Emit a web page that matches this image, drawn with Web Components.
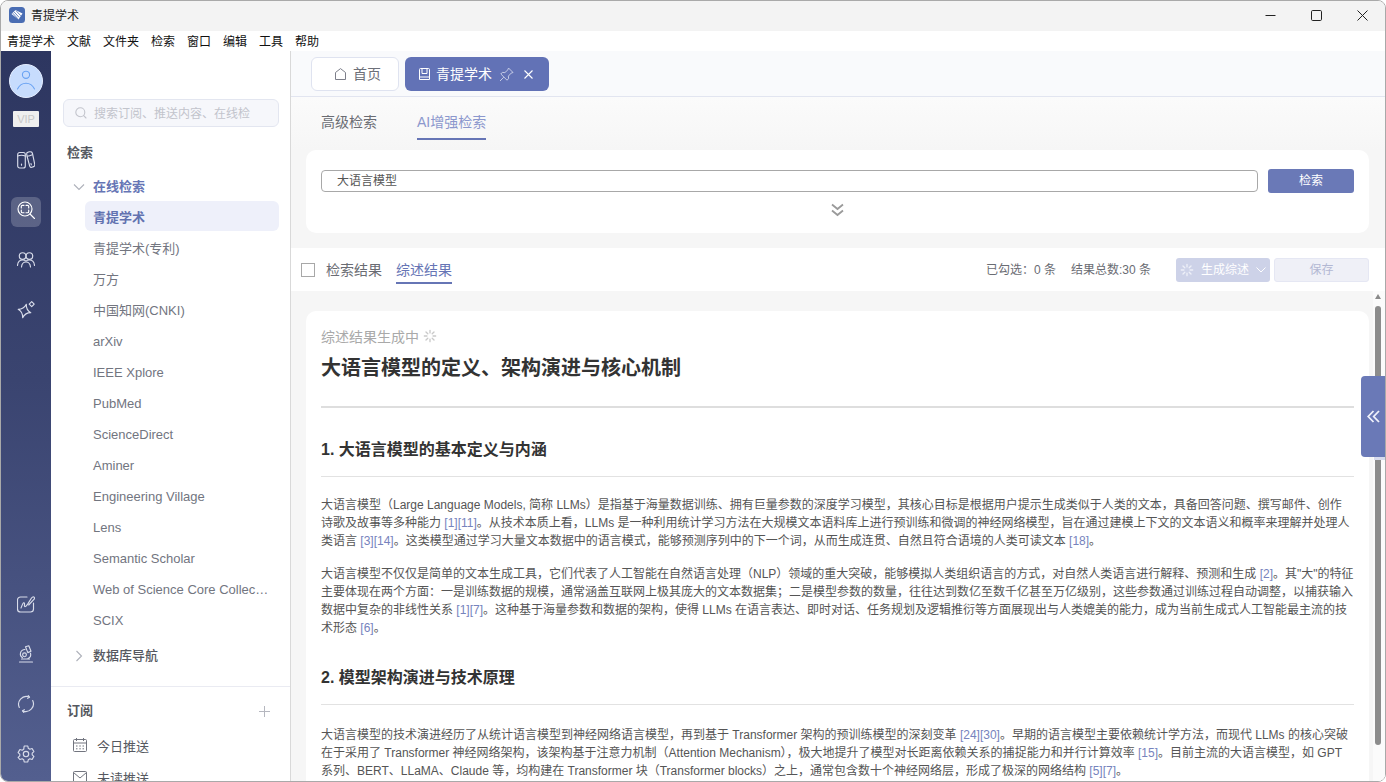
<!DOCTYPE html>
<html lang="zh-CN">
<head>
<meta charset="utf-8">
<title>青提学术</title>
<style>
  html, body { margin: 0; padding: 0; height: 100%; background: #fff; overflow: hidden; }
  body { font-family: "Liberation Sans", "Noto Sans CJK SC", sans-serif; }
</style>
</head>
<body>
<app-shell>
  <title-bar slot="title"></title-bar>
  <menu-bar slot="menu"></menu-bar>
  <side-rail slot="rail"></side-rail>
  <side-panel slot="side">
    <side-item active>青提学术</side-item>
    <side-item>青提学术(专利)</side-item>
    <side-item>万方</side-item>
    <side-item>中国知网(CNKI)</side-item>
    <side-item>arXiv</side-item>
    <side-item>IEEE Xplore</side-item>
    <side-item>PubMed</side-item>
    <side-item>ScienceDirect</side-item>
    <side-item>Aminer</side-item>
    <side-item>Engineering Village</side-item>
    <side-item>Lens</side-item>
    <side-item>Semantic Scholar</side-item>
    <side-item>Web of Science Core Collection</side-item>
    <side-item>SCIX</side-item>
  </side-panel>
  <tab-strip slot="main"></tab-strip>
  <sub-tabs slot="main"></sub-tabs>
  <search-panel slot="main"></search-panel>
  <result-bar slot="main"></result-bar>
  <review-area slot="main">
    <h2-title>1. 大语言模型的基本定义与内涵</h2-title>
    <review-para style="--top:19px">大语言模型（Large Language Models, 简称 LLMs）是指基于海量数据训练、拥有巨量参数的深度学习模型，其核心目标是根据用户提示生成类似于人类的文本，具备回答问题、撰写邮件、创作<br>诗歌及故事等多种能力 <a>[1][11]</a>。从技术本质上看，LLMs 是一种利用统计学习方法在大规模文本语料库上进行预训练和微调的神经网络模型，旨在通过建模上下文的文本语义和概率来理解并处理人<br>类语言 <a>[3][14]</a>。这类模型通过学习大量文本数据中的语言模式，能够预测序列中的下一个词，从而生成连贯、自然且符合语境的人类可读文本 <a>[18]</a>。</review-para>
    <review-para style="--top:15px">大语言模型不仅仅是简单的文本生成工具，它们代表了人工智能在自然语言处理（NLP）领域的重大突破，能够模拟人类组织语言的方式，对自然人类语言进行解释、预测和生成 <a>[2]</a>。其"大"的特征<br>主要体现在两个方面：一是训练数据的规模，通常涵盖互联网上极其庞大的文本数据集；二是模型参数的数量，往往达到数亿至数千亿甚至万亿级别，这些参数通过训练过程自动调整，以捕获输入<br>数据中复杂的非线性关系 <a>[1][7]</a>。这种基于海量参数和数据的架构，使得 LLMs 在语言表达、即时对话、任务规划及逻辑推衍等方面展现出与人类媲美的能力，成为当前生成式人工智能最主流的技<br>术形态 <a>[6]</a>。</review-para>
    <h2-title style="--top:29px">2. 模型架构演进与技术原理</h2-title>
    <review-para style="--top:21px">大语言模型的技术演进经历了从统计语言模型到神经网络语言模型，再到基于 Transformer 架构的预训练模型的深刻变革 <a>[24][30]</a>。早期的语言模型主要依赖统计学方法，而现代 LLMs 的核心突破<br>在于采用了 Transformer 神经网络架构，该架构基于注意力机制（Attention Mechanism），极大地提升了模型对长距离依赖关系的捕捉能力和并行计算效率 <a>[15]</a>。目前主流的大语言模型，如 GPT<br>系列、BERT、LLaMA、Claude 等，均构建在 Transformer 块（Transformer blocks）之上，通常包含数十个神经网络层，形成了极深的网络结构 <a>[5][7]</a>。</review-para>
  </review-area>
</app-shell>

<script>
const spinner = (size, color) => `
  <svg width="${size}" height="${size}" viewBox="0 0 16 16" fill="none" stroke="${color}" stroke-width="1.5" stroke-linecap="round">
    <path d="M8 1.5v3M8 11.5v3M1.5 8h3M11.5 8h3M3.4 3.4l2.1 2.1M10.5 10.5l2.1 2.1M3.4 12.6l2.1-2.1M10.5 5.5l2.1-2.1"/>
  </svg>`;

class AppShell extends HTMLElement {
  constructor() {
    super();
    this.attachShadow({ mode: "open" });
  }

  connectedCallback() {
    this.shadowRoot.innerHTML = `
      <style>
        :host {
          display: flex;
          flex-direction: column;
          width: 1386px;
          height: 782px;
          box-sizing: border-box;
          border: 1px solid #a9a9a9;
          border-radius: 8px;
          overflow: hidden;
          background: #fff;
        }
        .body {
          flex: 1;
          min-height: 0;
          display: flex;
        }
        .main {
          flex: 1;
          min-width: 0;
          display: flex;
          flex-direction: column;
          background: #f6f6f6;
        }
      </style>
      <slot name="title"></slot>
      <slot name="menu"></slot>
      <div class="body">
        <slot name="rail"></slot>
        <slot name="side"></slot>
        <div class="main"><slot name="main"></slot></div>
      </div>
    `;
  }
}

class TitleBar extends HTMLElement {
  constructor() {
    super();
    this.attachShadow({ mode: "open" });
  }

  connectedCallback() {
    this.shadowRoot.innerHTML = `
      <style>
        :host {
          display: flex;
          align-items: center;
          height: 30px;
          box-sizing: border-box;
          padding-bottom: 2px;
          background: #f3f3f3;
          font-size: 12px;
          color: #1c1c1c;
        }
        .logo { margin: 0 6px 0 8px; display: block; }
        .name { flex: 1; margin-bottom: 2px; }
        .ctl {
          width: 46px;
          height: 28px;
          display: flex;
          align-items: center;
          justify-content: center;
        }
      </style>
      <svg class="logo" width="16" height="16" viewBox="0 0 16 16">
        <rect width="16" height="16" rx="3.5" fill="#4a6db3"/>
        <path d="M2.500 7 6.500 3l7 3.500L9.500 12.500z" fill="#fff"/>
        <path d="M5 4.800l5 5.500M7 3.600l4.800 5.200M3.800 6.200l5 5.500" stroke="#4a6db3" stroke-width=".8" fill="none"/>
      </svg>
      <span class="name">青提学术</span>
      <div class="ctl"><svg width="11" height="11" viewBox="0 0 11 11"><path d="M.5 5.500h10" stroke="#222" fill="none"/></svg></div>
      <div class="ctl"><svg width="11" height="11" viewBox="0 0 11 11"><rect x=".5" y=".5" width="10" height="10" rx="1.200" stroke="#222" fill="none"/></svg></div>
      <div class="ctl"><svg width="11" height="11" viewBox="0 0 11 11"><path d="M.5.500l10 10M10.500.5l-10 10" stroke="#222" fill="none"/></svg></div>
    `;
  }
}

class MenuBar extends HTMLElement {
  constructor() {
    super();
    this.attachShadow({ mode: "open" });
  }

  connectedCallback() {
    const items = ["青提学术", "文献", "文件夹", "检索", "窗口", "编辑", "工具", "帮助"];
    this.shadowRoot.innerHTML = `
      <style>
        :host {
          display: flex;
          align-items: center;
          gap: 12px;
          height: 20px;
          box-sizing: border-box;
          padding: 0 0 2px 6px;
          background: #fff;
          font-size: 12px;
          color: #111;
        }
      </style>
      ${items.map(i => `<span>${i}</span>`).join("")}
    `;
  }
}

class SideRail extends HTMLElement {
  constructor() {
    super();
    this.attachShadow({ mode: "open" });
  }

  connectedCallback() {
    this.shadowRoot.innerHTML = `
      <style>
        :host {
          display: flex;
          flex-direction: column;
          align-items: center;
          width: 50px;
          flex: none;
          background: linear-gradient(180deg, #2d3660 0%, #3a4470 45%, #535f8f 100%);
        }
        .avatar {
          width: 34px;
          height: 34px;
          margin-top: 13px;
          box-sizing: border-box;
          border: 1px solid #e4edff;
          border-radius: 50%;
          background: #c7dcfd;
          display: flex;
          align-items: center;
          justify-content: center;
        }
        .vip {
          width: 26px;
          height: 16px;
          margin-top: 13px;
          margin-bottom: 20px;
          background: #efefef;
          border-radius: 1px;
          color: #c8c8c8;
          font-size: 11px;
          line-height: 17px;
          text-align: center;
        }
        .btn {
          width: 30px;
          height: 30px;
          box-sizing: border-box;
          padding-top: 4px;
          margin-bottom: 20px;
          border-radius: 6px;
          display: flex;
          justify-content: center;
        }
        .btn.on { background: rgba(255,255,255,0.2); }
        .btn svg {
          width: 18px;
          height: 18px;
          fill: none;
          stroke: #d8dcea;
          stroke-width: 1.15;
          stroke-linecap: round;
          stroke-linejoin: round;
        }
        .btn.on svg { stroke: #fff; }
        .spacer { flex: 1; }
      </style>
      <div class="avatar">
        <svg width="22" height="22" viewBox="0 0 22 22" fill="none" stroke="#6aa3f3" stroke-width="1.100" stroke-linecap="round">
          <circle cx="11" cy="4.800" r="3.600"/>
          <path d="M2.500 19C4.500 15 7.500 13.200 11 13.200S17.500 15 19.500 19"/>
        </svg>
      </div>
      <div class="vip">VIP</div>
      <div class="btn"><svg viewBox="0 0 18 18">
        <rect x=".7" y="1.500" width="7.600" height="15.500" rx="2"/>
        <path d="M.7 5c2.400-1 5.200-1 7.600 0"/>
        <path d="M10 1.700c.9-.6 3.500-1.200 4.300-.8.800.3 1 1 1.200 1.700l2.300 11c.2 1-.4 1.700-1.200 2l-1.700.6c-1 .3-1.900-.1-2.200-1.100L10 5c-.2-1.300-.6-2.500 0-3.300z"/>
        <path d="M10.300 5.200c1.700-.3 3.300-.8 5-1.500M4.500 13v1.200M14 12.600l.3 1.200"/>
      </svg></div>
      <div class="btn on"><svg viewBox="0 0 18 18">
        <circle cx="8" cy="8" r="7"/>
        <path d="M13 13 17.500 17.500"/>
        <path d="M4.300 7V5.300a1 1 0 0 1 1-1H7M9 4.300h1.700a1 1 0 0 1 1 1V7M11.700 9v1.700a1 1 0 0 1-1 1H9M7 11.700H5.300a1 1 0 0 1-1-1V9"/>
      </svg></div>
      <div class="btn"><svg viewBox="0 0 18 18">
        <circle cx="5.600" cy="5" r="3.300"/>
        <circle cx="12.400" cy="5" r="3.300"/>
        <path d="M.5 14.500C.7 11.200 2.800 9 5.800 9c1.300 0 2.400.4 3.200 1.100C9.800 9.400 10.900 9 12.200 9c3 0 5.100 2.200 5.300 5.500"/>
        <path d="M4.500 16c.3-3 2-5 4.500-5s4.200 2 4.500 5"/>
      </svg></div>
      <div class="btn"><svg viewBox="0 0 18 18">
        <path d="M7.500 3C8.300 6.700 10.200 9 14 10 10.200 11 8.300 13.300 7.500 17 6.700 13.300 4.800 11 1 10 4.800 9 6.700 6.700 7.500 3z" transform="rotate(15 7.500 10)"/>
        <path d="M14.700.6l2.500 2.500-2.500 2.500-2.500-2.500z"/>
      </svg></div>
      <div class="spacer"></div>
      <div class="btn"><svg viewBox="0 0 18 18">
        <path d="M16.500 8v6a3 3 0 0 1-3 3h-10a3 3 0 0 1-3-3V5a3 3 0 0 1 3-3H10"/>
        <path d="M4 13c1-2 1.600-5.500 3-5.300 1.400.2-.4 3.800 1 3.900 1.300.1 2-1.500 3-3L14.500 3c.8-1 1.900-1.500 2.600-.8.700.7.400 1.700-.4 2.500l-5 5.300"/>
      </svg></div>
      <div class="btn"><svg viewBox="0 0 18 18">
        <path d="M8.500 1.800 11.800.8 14 6.300l-3.200 1.300z"/>
        <path d="M8 4.500a4.500 4.500 0 0 0-2.500 8.300"/>
        <circle cx="7.500" cy="9.800" r="1.900"/>
        <path d="M13.500 8.200c.6 2.300-.4 4.500-2.500 5.400"/>
        <path d="M4.500 14h8M2.500 17h13"/>
      </svg></div>
      <div class="btn"><svg viewBox="0 0 18 18">
        <path d="M2.300 12.500a7.800 7.800 0 0 1 9.500-10.700"/>
        <path d="M15.700 5.500a7.800 7.800 0 0 1-9.500 10.700"/>
        <path d="M11.200.5l1.300 1.700-1.900 1.100M6.800 17.500l-1.300-1.700 1.900-1.100"/>
      </svg></div>
      <div class="btn" style="margin-bottom:10px"><svg viewBox="0 0 18 18">
        <circle cx="9" cy="9" r="2.700"/>
        <path d="M7.200 1h3.600l.5 2.300 1.500.9 2.300-.7 1.800 3.100-1.700 1.600v1.600l1.700 1.600-1.800 3.100-2.300-.7-1.500.9-.5 2.300H7.200l-.5-2.300-1.500-.9-2.300.7L1.100 12.400l1.700-1.600V9.200L1.100 7.600l1.800-3.100 2.300.7 1.500-.9z"/>
      </svg></div>
    `;
  }
}

class SidePanel extends HTMLElement {
  constructor() {
    super();
    this.attachShadow({ mode: "open" });
  }

  connectedCallback() {
    this.shadowRoot.innerHTML = `
      <style>
        :host {
          display: block;
          flex: none;
          width: 239px;
          box-sizing: content-box;
          border-right: 1px solid #d9d9d9;
          background: #fff;
          overflow: hidden;
          font-size: 13px;
          color: #72757f;
        }
        .search {
          display: flex;
          align-items: center;
          gap: 7px;
          box-sizing: border-box;
          width: 216px;
          height: 28px;
          margin: 48px 0 0 12px;
          padding: 0 0 1px 11px;
          background: #f6f7fb;
          border: 1px solid #e3e6f0;
          border-radius: 6px;
          font-size: 12px;
          color: #c2c4cc;
          white-space: nowrap;
          overflow: hidden;
        }
        .head {
          margin: 16px 0 0 16px;
          height: 20px;
          line-height: 20px;
          font-weight: 700;
          color: #555860;
        }
        .tree {
          display: flex;
          align-items: center;
          height: 20px;
          line-height: 20px;
          margin-left: 22px;
          gap: 8px;
        }
        .tree svg { flex: none; }
        .online {
          margin-top: 14px;
          margin-bottom: 4px;
          color: #6675b5;
          font-weight: 700;
        }
        .list {
          display: flex;
          flex-direction: column;
          gap: 1px;
          margin-left: 34px;
          width: 194px;
        }
        .db {
          margin-top: 12px;
          color: #555860;
          font-weight: 500;
        }
        .sep {
          height: 1px;
          margin-top: 20px;
          background: #eaebf2;
        }
        .sub {
          display: flex;
          align-items: center;
          justify-content: space-between;
          margin-top: 14px;
          padding-right: 20px;
        }
        .sub .head { margin-top: 0; }
        .row {
          display: flex;
          align-items: center;
          gap: 10px;
          margin: 14px 0 0 22px;
          height: 20px;
          color: #555860;
        }
        .row.next { margin-top: 12px; }
      </style>
      <div class="search">
        <svg width="12" height="12" viewBox="0 0 12 12" fill="none" stroke="#c2c4cc" stroke-width="1.100" stroke-linecap="round">
          <circle cx="5.300" cy="5.300" r="4.500"/><path d="M8.700 8.700 11 11"/>
        </svg>
        <span>搜索订阅、推送内容、在线检</span>
      </div>
      <div class="head">检索</div>
      <div class="tree online">
        <svg width="12" height="8" viewBox="0 0 12 8" fill="none" stroke="#aeb1ba" stroke-width="1.100"><path d="M1 1.500 6 6.500l5-5"/></svg>
        <span>在线检索</span>
      </div>
      <div class="list"><slot></slot></div>
      <div class="tree db">
        <svg width="12" height="12" viewBox="0 0 12 12" fill="none" stroke="#aeb1ba" stroke-width="1.100"><path d="M3.500 1 8.500 6l-5 5"/></svg>
        <span>数据库导航</span>
      </div>
      <div class="sep"></div>
      <div class="sub">
        <div class="head">订阅</div>
        <svg width="11" height="11" viewBox="0 0 11 11" stroke="#b5b7bf" fill="none"><path d="M5.500 0v11M0 5.500h11"/></svg>
      </div>
      <div class="row">
        <svg width="14" height="14" viewBox="0 0 14 14" fill="none" stroke="#72757f" stroke-width="1"><rect x=".5" y="1.500" width="13" height="12" rx="1"/><path d="M.5 5h13M3.500 0v3M10.500 0v3M3 8h1.500M6.300 8h1.500M9.500 8H11M3 10.800h1.500M6.300 10.800h1.500M9.500 10.800H11"/></svg>
        <span>今日推送</span>
      </div>
      <div class="row next">
        <svg width="14" height="14" viewBox="0 0 14 14" fill="none" stroke="#72757f" stroke-width="1"><rect x=".5" y="1.500" width="13" height="11" rx="1"/><path d="M.5 2.500 7 8l6.500-5.500"/></svg>
        <span>未读推送</span>
      </div>
    `;
  }
}

class SideItem extends HTMLElement {
  constructor() {
    super();
    this.attachShadow({ mode: "open" });
  }

  connectedCallback() {
    this.shadowRoot.innerHTML = `
      <style>
        :host {
          display: block;
          height: 30px;
          line-height: 33px;
          box-sizing: border-box;
          padding: 0 10px 0 8px;
          border-radius: 6px;
          white-space: nowrap;
          overflow: hidden;
          text-overflow: ellipsis;
        }
        :host([active]) {
          background: #eef0fa;
          color: #6272b0;
          font-weight: 700;
        }
      </style>
      <slot></slot>
    `;
  }
}

class TabStrip extends HTMLElement {
  constructor() {
    super();
    this.attachShadow({ mode: "open" });
  }

  connectedCallback() {
    this.shadowRoot.innerHTML = `
      <style>
        :host {
          display: flex;
          gap: 6px;
          height: 46px;
          box-sizing: border-box;
          padding: 6px 0 0 20px;
          background: #f9fafc;
          border-bottom: 1px solid #e2e5f0;
          font-size: 14px;
        }
        .tab {
          display: flex;
          align-items: center;
          height: 34px;
          box-sizing: border-box;
          border-radius: 6px;
        }
        .tab span { margin-bottom: 2px; }
        .home {
          width: 88px;
          padding-left: 23px;
          gap: 7px;
          background: #fff;
          border: 1px solid #dfe3f0;
          color: #6d7079;
        }
        .cur {
          width: 144px;
          padding-left: 14px;
          background: #6272b6;
          color: #fff;
        }
        .cur .t { margin: 0 7px 2px 6px; }
        .cur .pin { margin-right: 10px; }
      </style>
      <div class="tab home">
        <svg width="11" height="12" viewBox="0 0 11 12" fill="none" stroke="#7d7f8a" stroke-width="1"><path d="M.5 4.500 5.500.6l5 3.900v7h-10z"/></svg>
        <span>首页</span>
      </div>
      <div class="tab cur">
        <svg width="11" height="12" viewBox="0 0 11 12" fill="none" stroke="#fff" stroke-width="1"><path d="M.5 1.500a1 1 0 0 1 1-1h8a1 1 0 0 1 1 1v10H.5zM3 .5v5h5v-5M.5 9h10"/></svg>
        <span class="t">青提学术</span>
        <svg class="pin" width="15" height="15" viewBox="0 0 15 15" fill="none" stroke="#c5cbe6" stroke-width="1"><path d="M9.500 1 14 5.500l-1.800.6-2.800 3 .2 2.600L8 13.200 1.800 7l1.500-1.600 2.600.2 3-2.800zM4.800 10.200 1 14"/></svg>
        <svg width="9" height="9" viewBox="0 0 9 9" stroke="#fff" stroke-width="1.100" fill="none"><path d="M.5.500l8 8M8.500.5l-8 8"/></svg>
      </div>
    `;
  }
}

class SubTabs extends HTMLElement {
  constructor() {
    super();
    this.attachShadow({ mode: "open" });
  }

  connectedCallback() {
    this.shadowRoot.innerHTML = `
      <style>
        :host {
          display: flex;
          gap: 40px;
          height: 53px;
          box-sizing: border-box;
          padding: 15px 0 0 30px;
          background: linear-gradient(180deg, #fbfbfb, #f6f6f6);
          font-size: 14px;
          color: #6a6c73;
        }
        span {
          height: 28px;
          line-height: 20px;
          box-sizing: border-box;
        }
        .on {
          color: #8b97cd;
          border-bottom: 2px solid #6675b5;
        }
      </style>
      <span>高级检索</span>
      <span class="on">AI增强检索</span>
    `;
  }
}

class SearchPanel extends HTMLElement {
  constructor() {
    super();
    this.attachShadow({ mode: "open" });
  }

  connectedCallback() {
    this.shadowRoot.innerHTML = `
      <style>
        :host {
          display: block;
          height: 83px;
          margin: 0 16px 15px 15px;
          box-sizing: border-box;
          padding: 19px 15px 0;
          background: #fff;
          border-radius: 10px;
          font-size: 12px;
        }
        .line { display: flex; align-items: center; gap: 10px; }
        .input {
          flex: 1;
          height: 22px;
          line-height: 20px;
          box-sizing: border-box;
          padding-left: 15px;
          border: 1px solid #a8a8a8;
          border-radius: 4px;
          color: #555;
        }
        .go {
          width: 86px;
          height: 24px;
          line-height: 24px;
          border-radius: 3px;
          background: #6a79b7;
          color: #fff;
          text-align: center;
        }
        .more { display: flex; justify-content: center; margin-top: 10px; }
      </style>
      <div class="line">
        <div class="input">大语言模型</div>
        <div class="go">检索</div>
      </div>
      <div class="more">
        <svg width="13" height="14" viewBox="0 0 13 14" fill="none" stroke="#9a9a9a" stroke-width="1.800"><path d="M1 1.500 6.500 6 12 1.500M1 7.500 6.500 12 12 7.500"/></svg>
      </div>
    `;
  }
}

class ResultBar extends HTMLElement {
  constructor() {
    super();
    this.attachShadow({ mode: "open" });
  }

  connectedCallback() {
    this.shadowRoot.innerHTML = `
      <style>
        :host {
          display: flex;
          align-items: center;
          height: 43px;
          box-sizing: border-box;
          padding: 0 16px 0 10px;
          background: #fff;
          font-size: 12px;
          color: #6a6c73;
        }
        .check {
          width: 14px;
          height: 14px;
          box-sizing: border-box;
          border: 1px solid #a8a8a8;
          margin-right: 11px;
        }
        .tab {
          height: 30px;
          line-height: 32px;
          margin: 6px 14px 0 0;
          box-sizing: border-box;
          font-size: 14px;
          align-self: flex-start;
        }
        .tab.on {
          color: #6675b5;
          border-bottom: 2px solid #6675b5;
        }
        .gap { flex: 1; }
        .count { margin: 0 15px 2px 0; white-space: nowrap; }
        .gen, .save {
          height: 24px;
          box-sizing: border-box;
          border-radius: 3px;
          display: flex;
          align-items: center;
        }
        .gen {
          width: 94px;
          padding-left: 4px;
          gap: 7px;
          margin: 0 4px 0 5px;
          background: #cdd2e8;
          color: #fff;
        }
        .gen span { margin-bottom: 2px; }
        .save {
          width: 95px;
          justify-content: center;
          padding-bottom: 2px;
          background: #eff0f7;
          border: 1px solid #e5e7f3;
          color: #b3b8d3;
        }
      </style>
      <div class="check"></div>
      <div class="tab">检索结果</div>
      <div class="tab on">综述结果</div>
      <div class="gap"></div>
      <span class="count">已勾选：0 条</span>
      <span class="count" style="margin-right:20px">结果总数:30 条</span>
      <div class="gen">
        ${spinner(14, "#eef0f8")}
        <span>生成综述</span>
        <svg width="10" height="6" viewBox="0 0 10 6" fill="none" stroke="#fff" stroke-width="1"><path d="M.5.500 5 5 9.500.5"/></svg>
      </div>
      <div class="save">保存</div>
    `;
  }
}

class ReviewArea extends HTMLElement {
  constructor() {
    super();
    this.attachShadow({ mode: "open" });
  }

  connectedCallback() {
    this.shadowRoot.innerHTML = `
      <style>
        :host {
          display: flex;
          flex: 1;
          min-height: 0;
          position: relative;
          overflow: hidden;
          background: #f6f6f6;
        }
        .pad {
          flex: 1;
          min-width: 0;
          padding: 20px 4px 0 15px;
        }
        .card {
          height: 100%;
          box-sizing: border-box;
          padding: 15px 15px 0;
          background: #fff;
          border-radius: 10px 10px 0 0;
          overflow: hidden;
        }
        .status {
          display: flex;
          align-items: center;
          gap: 4px;
          height: 20px;
          box-sizing: border-box;
          padding-bottom: 1px;
          font-size: 14px;
          color: #a9a9a9;
        }
        h1 {
          margin: 7px 0 0;
          height: 30px;
          line-height: 30px;
          font-size: 20px;
          font-weight: 700;
          color: #333;
        }
        hr {
          height: 2px;
          margin: 23px 0 0;
          border: 0;
          background: #dedede;
        }
        .bar {
          flex: none;
          width: 12px;
          background: #fbfbfb;
          display: flex;
          flex-direction: column;
          align-items: center;
        }
        .up {
          margin-top: 3px;
          width: 0;
          height: 0;
          border-left: 3px solid transparent;
          border-right: 3px solid transparent;
          border-bottom: 5px solid #8a8a8a;
          transform: translateX(-1px);
        }
        .thumb {
          width: 6px;
          height: 439px;
          margin-top: 7px;
          border-radius: 3px;
          background: #8c8c8c;
          transform: translateX(-1px);
        }
        .fold {
          position: absolute;
          top: 85px;
          right: 0;
          width: 24px;
          height: 81px;
          border-radius: 4px 0 0 4px;
          background: #6a79b7;
          display: flex;
          align-items: center;
          justify-content: center;
        }
        .fold::after {
          content: "";
          position: absolute;
          top: 81px;
          right: 0;
          width: 11px;
          height: 3px;
          background: #d8dbee;
        }
      </style>
      <div class="pad">
        <div class="card">
          <div class="status"><span>综述结果生成中</span>${spinner(14, "#c9c9c9")}</div>
          <h1>大语言模型的定义、架构演进与核心机制</h1>
          <hr>
          <slot></slot>
        </div>
      </div>
      <div class="bar"><div class="up"></div><div class="thumb"></div></div>
      <div class="fold">
        <svg width="13" height="13" viewBox="0 0 13 13" fill="none" stroke="#f0f2fb" stroke-width="1.800"><path d="M6.500 1 1.200 6.500 6.500 12M12 1 6.700 6.500 12 12"/></svg>
      </div>
    `;
  }
}

class H2Title extends HTMLElement {
  constructor() {
    super();
    this.attachShadow({ mode: "open" });
  }

  connectedCallback() {
    this.shadowRoot.innerHTML = `
      <style>
        :host {
          display: block;
          margin-top: var(--top, 30px);
          padding-bottom: 14px;
          line-height: 24px;
          font-size: 16px;
          font-weight: 700;
          color: #333;
          border-bottom: 1px solid #e2e2e2;
        }
      </style>
      <slot></slot>
    `;
  }
}

class ReviewPara extends HTMLElement {
  constructor() {
    super();
    this.attachShadow({ mode: "open" });
  }

  connectedCallback() {
    this.shadowRoot.innerHTML = `
      <style>
        :host {
          display: block;
          margin-top: var(--top, 14px);
          line-height: 18px;
          font-size: 12px;
          color: #555;
          white-space: nowrap;
        }
        ::slotted(a) { color: #7683bd; }
      </style>
      <slot></slot>
    `;
  }
}

customElements.define("app-shell", AppShell);
customElements.define("title-bar", TitleBar);
customElements.define("menu-bar", MenuBar);
customElements.define("side-rail", SideRail);
customElements.define("side-panel", SidePanel);
customElements.define("side-item", SideItem);
customElements.define("tab-strip", TabStrip);
customElements.define("sub-tabs", SubTabs);
customElements.define("search-panel", SearchPanel);
customElements.define("result-bar", ResultBar);
customElements.define("review-area", ReviewArea);
customElements.define("h2-title", H2Title);
customElements.define("review-para", ReviewPara);
</script>
</body>
</html>
